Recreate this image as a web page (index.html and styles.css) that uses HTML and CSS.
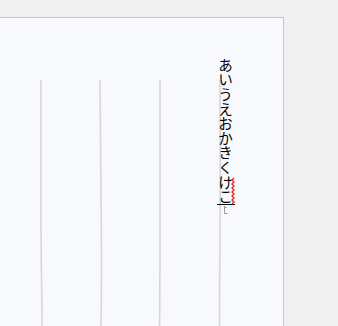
FILE: index.html
```html
<!DOCTYPE html>
<html>
<head>
<meta charset="utf-8">
<link rel="stylesheet" href="styles.css">
</head>
<body>
<div class="desk">
  <div class="paper">
    <svg class="guides" width="284" height="309" viewBox="0 0 284 309">
      <path d="M41 63 C41 150 40.5 200 41.5 260 S42 300 42 309" />
      <path d="M100 63 C100 100 100.5 140 101 180 S101.5 280 101 309" />
      <path d="M160 63 C160 150 160.5 220 160 250 S160 290 159.5 309" />
      <path d="M220 63 C220 120 220.5 180 220 220 S219.5 280 219.5 309" />
    </svg>
    <div class="note">あいうえおかきくけこ</div>
    <svg class="ime" width="22" height="46" viewBox="0 0 22 46">
      <path class="wave" d="M17 1 l-2 2 l2 2 l-2 2 l2 2 l-2 2 l2 2 l-2 2 l2 2 l-2 2 l2 2 l-2 2 l2 2 l-2 2" />
      <path class="bar" d="M0 27.5 H18" />
      <path class="mark" d="M7.5 29 V36.5 H10.5 M7.5 30.5 H9.5" />
    </svg>
  </div>
</div>
</body>
</html>
```

FILE: styles.css
```css
html, body {
  margin: 0;
  padding: 0;
  background: #f0f0f0;
}
.desk {
  width: 338px;
  height: 326px;
  overflow: hidden;
  padding-top: 17px;
  box-sizing: border-box;
}
.paper {
  position: relative;
  width: 284px;
  height: 309px;
  box-sizing: border-box;
  background: #f8f9fd;
  border-top: 1px solid #c6c6c6;
  border-right: 1px solid #c6c6c6;
}
.guides {
  position: absolute;
  left: 0;
  top: -1px;
}
.guides path {
  fill: none;
  stroke: #d6d6d8;
  stroke-width: 1.6;
}
.note {
  position: absolute;
  left: 217px;
  top: 40px;
  writing-mode: vertical-rl;
  font-family: "Noto Sans CJK JP", sans-serif;
  font-size: 14.6px;
  line-height: 17px;
  color: #000;
}
.ime {
  position: absolute;
  left: 217px;
  top: 159px;
}
.wave {
  fill: none;
  stroke: #e8201c;
  stroke-width: 1.3;
}
.bar {
  stroke: #111;
  stroke-width: 1;
}
.mark {
  fill: none;
  stroke: #9a9a9a;
  stroke-width: 1;
}
```
